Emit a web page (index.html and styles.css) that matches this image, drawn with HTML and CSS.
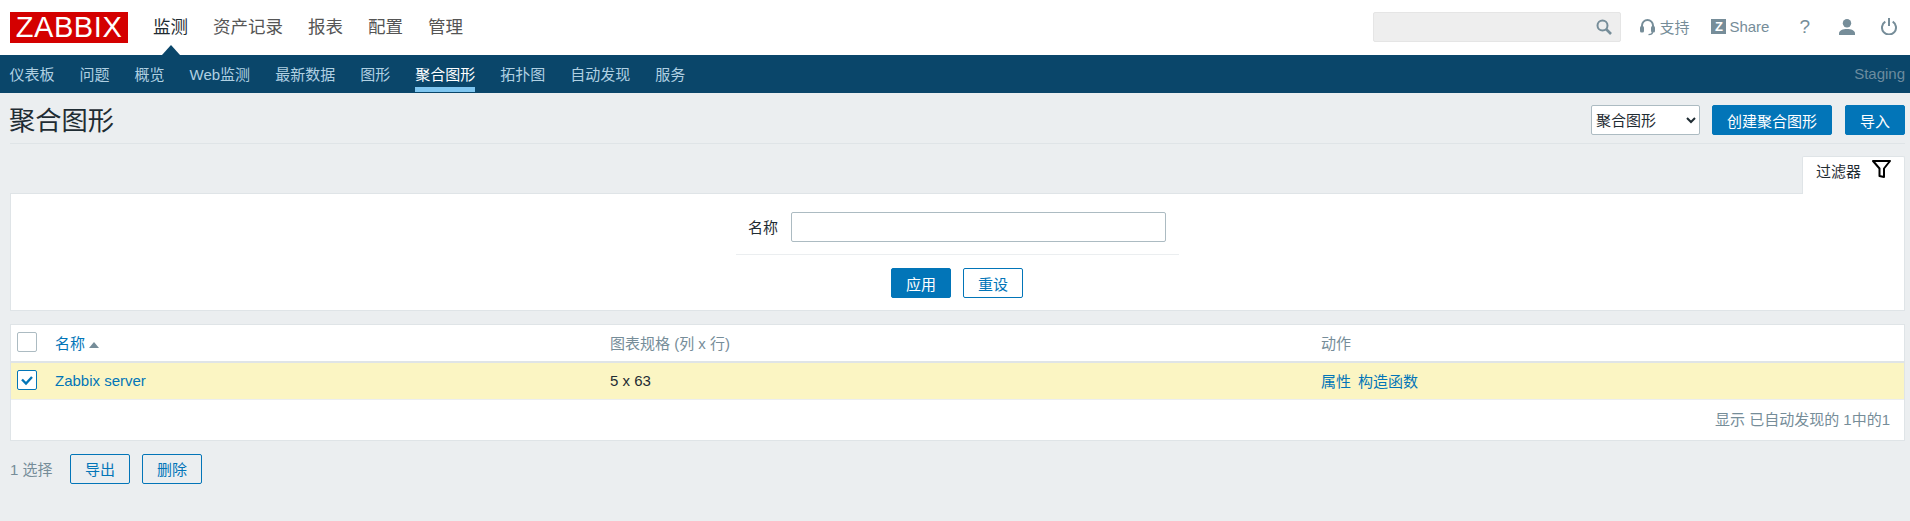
FILE: index.html
```html
<!DOCTYPE html>
<html lang="zh-CN">
<head>
    <meta charset="UTF-8" />
    <title>聚合图形</title>
    <link rel="stylesheet" href="styles.css">
</head>
<body>
    <header class="topbar">
        <div class="logo">ZABBIX</div>
        <nav class="main-nav">
            <a class="active">监测</a>
            <a>资产记录</a>
            <a>报表</a>
            <a>配置</a>
            <a>管理</a>
        </nav>
        <div class="search">
            <svg width="18" height="18" viewBox="0 0 18 18"><circle cx="7.5" cy="7.5" r="5" fill="none" stroke="#768d99" stroke-width="2"/><path d="M11 11l5 5" stroke="#768d99" stroke-width="2.6"/></svg>
        </div>
        <a class="tool support">
            <svg width="15" height="18" viewBox="0 0 15 18"><path d="M2 11V7.5a5.5 5.5 0 0 1 11 0V11" fill="none" stroke="#768d99" stroke-width="2"/><rect x="0" y="8" width="4" height="6.5" rx="1.5" fill="#768d99"/><rect x="11" y="8" width="4" height="6.5" rx="1.5" fill="#768d99"/><path d="M12.5 14c0 2-2 2.6-4 2.6" fill="none" stroke="#768d99" stroke-width="1.4"/></svg>
            <span>支持</span>
        </a>
        <a class="tool share"><span class="z-mark">Z</span><span>Share</span></a>
        <a class="tool help">?</a>
        <a class="tool user">
            <svg width="16" height="16" viewBox="0 0 16 16"><circle cx="8" cy="4.2" r="4.2" fill="#768d99"/><path d="M0 16v-1.6C0 11.4 4 10 8 10s8 1.4 8 4.4V16z" fill="#768d99"/></svg>
        </a>
        <a class="tool power">
            <svg width="16" height="17" viewBox="0 0 16 17"><path d="M4.3 3.6a7 7 0 1 0 7.4 0" fill="none" stroke="#768d99" stroke-width="2"/><path d="M8 0v8" stroke="#768d99" stroke-width="2"/></svg>
        </a>
    </header>

    <nav class="sub-nav">
        <a>仪表板</a>
        <a>问题</a>
        <a>概览</a>
        <a>Web监测</a>
        <a>最新数据</a>
        <a>图形</a>
        <a class="active">聚合图形</a>
        <a>拓扑图</a>
        <a>自动发现</a>
        <a>服务</a>
        <span class="server-name">Staging</span>
    </nav>

    <main class="page">
        <div class="page-title">
            <h1>聚合图形</h1>
            <div class="page-actions">
                <select class="type-select">
                    <option>聚合图形</option>
                </select>
                <button class="btn create">创建聚合图形</button>
                <button class="btn">导入</button>
            </div>
        </div>

        <div class="filter-tabs">
            <div class="filter-tab">
                <span>过滤器</span>
                <svg width="19" height="18" viewBox="0 0 19 18"><path d="M1 1h17l-6 7.500V17l-4.500-1V8.500z" fill="none" stroke="#000" stroke-width="2" stroke-linejoin="round"/></svg>
            </div>
        </div>
        <section class="filter">
            <div class="filter-row">
                <label>名称</label>
                <input type="text" class="filter-input" />
            </div>
            <div class="filter-buttons">
                <button class="btn">应用</button>
                <button class="btn outline">重设</button>
            </div>
        </section>

        <section class="list">
            <table>
                <thead>
                    <tr>
                        <th class="col-check"><span class="checkbox"></span></th>
                        <th class="col-name"><a>名称</a><span class="sort-up"></span></th>
                        <th class="col-size">图表规格 (列 x 行)</th>
                        <th>动作</th>
                    </tr>
                </thead>
                <tbody>
                    <tr class="selected">
                        <td>
                            <span class="checkbox checked">
                                <svg width="14" height="12" viewBox="0 0 14 12"><path d="M2 5.500l4 4 6-6.500" fill="none" stroke="#0275b8" stroke-width="2.400"/></svg>
                            </span>
                        </td>
                        <td><a>Zabbix server</a></td>
                        <td>5 x 63</td>
                        <td><span class="row-links"><a>属性</a><a>构造函数</a></span></td>
                    </tr>
                </tbody>
            </table>
            <div class="list-footer">显示 已自动发现的 1中的1</div>
        </section>

        <div class="bulk-actions">
            <span class="selected-count">1 选择</span>
            <button class="btn outline">导出</button>
            <button class="btn outline">删除</button>
        </div>
    </main>
</body>
</html>
```

FILE: styles.css
```css
* {
    box-sizing: border-box;
}

body {
    margin: 0;
    background: #ebeef0;
    color: #1f2c33;
    font-family: "Liberation Sans", "Noto Sans CJK SC", sans-serif;
    font-size: 15px;
}

a {
    text-decoration: none;
}

.topbar {
    display: flex;
    align-items: center;
    height: 55px;
    background: #fff;
    padding-left: 10px;
}

.logo {
    width: 118px;
    height: 31px;
    background: #d40000;
    color: #fff;
    font-size: 29px;
    line-height: 31px;
    letter-spacing: 0.6px;
    text-align: center;
}

.main-nav {
    display: flex;
    gap: 25px;
    margin-left: 25px;
    margin-top: -4px;
    font-size: 17.500px;
}

.main-nav a {
    color: #555;
}

.main-nav .active {
    position: relative;
    color: #1f2c33;
}

.main-nav .active::after {
    content: "";
    position: absolute;
    left: 50%;
    top: 32px;
    margin-left: -9px;
    border-left: 9px solid transparent;
    border-right: 9px solid transparent;
    border-bottom: 10px solid #0a466a;
}

.search {
    display: flex;
    align-items: center;
    justify-content: flex-end;
    width: 248px;
    height: 30px;
    margin-left: auto;
    margin-top: -1px;
    padding-right: 7px;
    background: #eeeeee;
    border: 1px solid #e5e5e5;
    border-radius: 2px;
}

.tool {
    display: flex;
    align-items: center;
    margin-top: -2px;
    color: #768d99;
}

.tool svg {
    flex: none;
}

.support {
    gap: 4px;
    margin-left: 19px;
}

.share {
    gap: 3px;
    margin-left: 22px;
}

.z-mark {
    width: 15px;
    height: 15px;
    background: #768d99;
    color: #fff;
    font-size: 13px;
    font-weight: bold;
    line-height: 15px;
    text-align: center;
}

.help {
    margin-left: 30px;
    font-size: 19px;
}

.user {
    margin-left: 29px;
}

.power {
    margin-left: 26px;
    margin-right: 13px;
}

.sub-nav {
    display: flex;
    align-items: center;
    gap: 25px;
    height: 38px;
    padding: 0 5px 2px 9.500px;
    background: #0a466a;
}

.sub-nav a {
    color: #b0d0e2;
}

.sub-nav .active {
    position: relative;
    color: #fff;
}

.sub-nav .active::after {
    content: "";
    position: absolute;
    left: 0;
    right: 0;
    bottom: -8px;
    height: 5px;
    background: #7fc6f0;
}

.server-name {
    margin-left: auto;
    color: #6c8c9f;
}

.page {
    padding: 0 5px 0 10px;
}

.page-title {
    display: flex;
    align-items: center;
    justify-content: space-between;
    height: 51px;
    padding-top: 4px;
    border-bottom: 1px solid #dfe4e7;
}

.page-title h1 {
    margin: 0 0 2px -1px;
    font-size: 26.250px;
    font-weight: normal;
}

.page-actions {
    display: flex;
    gap: 12px;
}

.type-select {
    width: 109px;
    height: 30px;
    background: #fff;
    border: 1px solid #acbbc2;
    border-radius: 2px;
    color: #1f2c33;
    font-family: inherit;
    font-size: 15px;
}

.btn {
    min-width: 60px;
    height: 30px;
    padding: 0 14px;
    background: #0275b8;
    border: 1px solid #0275b8;
    border-radius: 2px;
    color: #fff;
    font-family: inherit;
    font-size: 15px;
}

.btn.create {
    margin-right: 1px;
}

.btn.outline {
    background: transparent;
    color: #0275b8;
}

.filter-tabs {
    display: flex;
    justify-content: flex-end;
    margin-top: 12px;
}

.filter-tab {
    display: flex;
    align-items: center;
    justify-content: space-between;
    width: 103px;
    height: 38px;
    margin-bottom: -1px;
    padding: 0 13px 10px 13px;
    position: relative;
    background: #fff;
    border: 1px solid #dfe4e7;
    border-bottom: 0;
    border-radius: 2px 2px 0 0;
}

.filter-tab svg {
    margin-bottom: 3px;
}

.filter {
    display: flex;
    flex-direction: column;
    align-items: center;
    height: 118px;
    background: #fff;
    border: 1px solid #dfe4e7;
    padding-top: 18px;
}

.filter-row {
    display: flex;
    align-items: center;
    justify-content: flex-end;
    gap: 13px;
    width: 443px;
    padding: 0 13px 12px 0;
    border-bottom: 1px solid #ebeef0;
}

.filter-row label {
    margin-bottom: 2px;
}

.filter-input {
    width: 375px;
    height: 30px;
    border: 1px solid #acbbc2;
    border-radius: 2px;
    background: #fff;
}

.filter-buttons {
    display: flex;
    gap: 12px;
    margin-top: 13px;
    margin-right: 1px;
}

.list {
    margin-top: 13px;
    background: #fff;
    border: 1px solid #dfe4e7;
}

table {
    width: 100%;
    border-collapse: collapse;
    table-layout: fixed;
}

th {
    height: 37px;
    padding: 0 6px 2px;
    border-bottom: 2px solid #dfe4e7;
    color: #768d99;
    font-weight: normal;
    text-align: left;
}

td {
    height: 37px;
    padding: 0 6px 1px;
    border-bottom: 1px solid #ebeef0;
    color: #1f2c33;
}

th a,
td a {
    color: #0275b8;
}

.col-check {
    width: 38px;
}

.col-name {
    width: 555px;
}

.col-size {
    width: 711px;
}

.selected td {
    background: #fbf5c3;
}

.checkbox {
    display: flex;
    align-items: center;
    justify-content: center;
    width: 20px;
    height: 20px;
    background: #fff;
    border: 1px solid #acbbc2;
    border-radius: 2px;
}

.checkbox.checked {
    border-color: #0275b8;
}

.sort-up {
    display: inline-block;
    margin-left: 4px;
    vertical-align: 1px;
    border-left: 5px solid transparent;
    border-right: 5px solid transparent;
    border-bottom: 6px solid #768d99;
}

.row-links {
    display: flex;
    align-items: center;
    gap: 7px;
}

.list-footer {
    height: 40px;
    padding: 0 14px 0 0;
    color: #768d99;
    line-height: 40px;
    text-align: right;
}

.bulk-actions {
    display: flex;
    align-items: center;
    gap: 12px;
    margin-top: 13px;
}

.selected-count {
    width: 48px;
    color: #768d99;
}
```
